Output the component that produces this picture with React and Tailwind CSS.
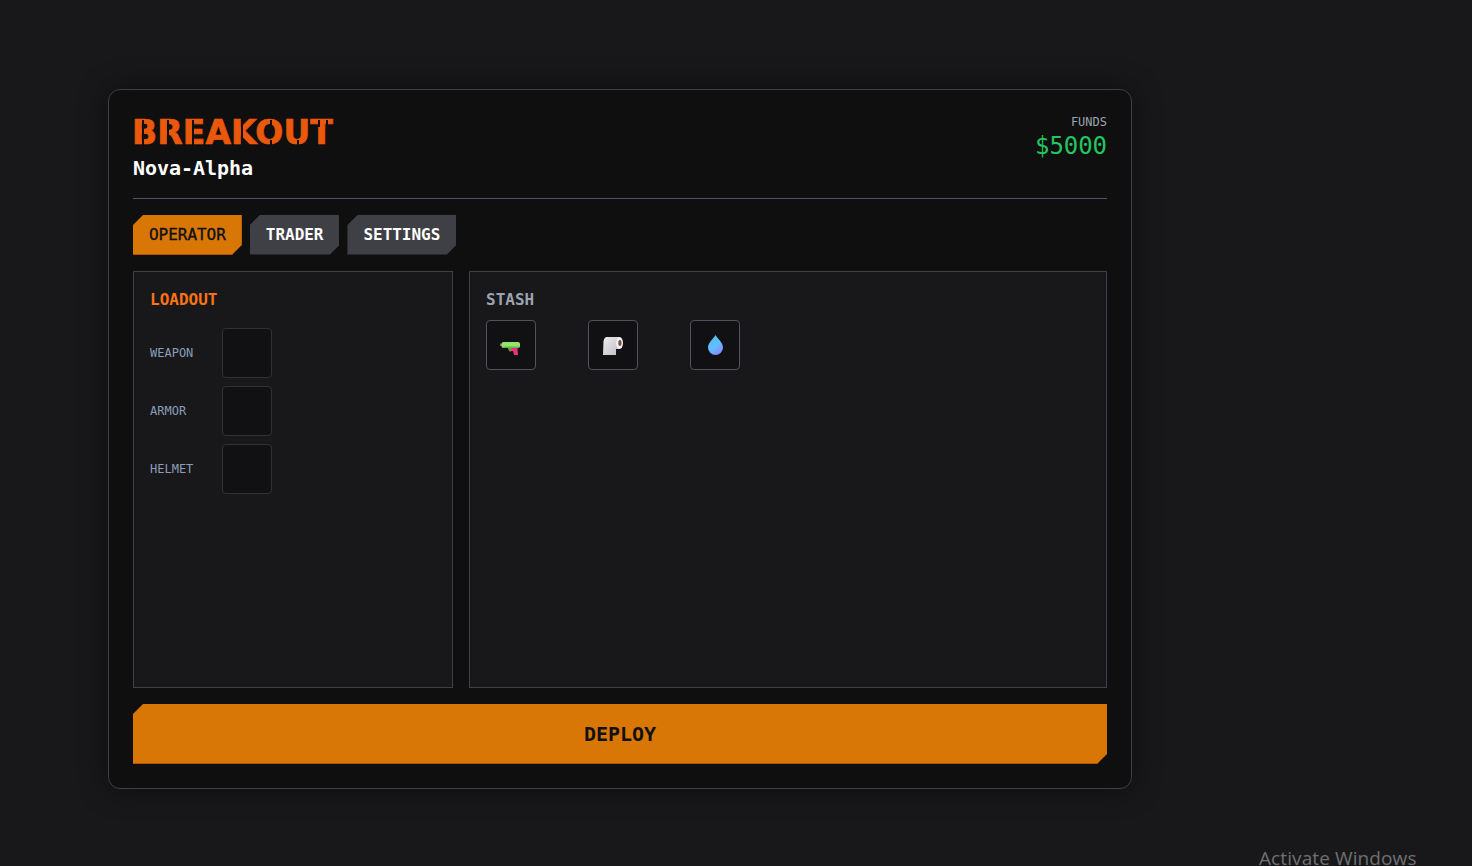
import React from 'react'

const WaterGun = () => (
  <svg width="20" height="13" viewBox="0 0 20 13" className="mt-[7px] mr-[2px]">
    <path d="M8 6h9.5l.5 7h-4l-1-4H9z" fill="#ec2f78" />
    <path d="M8 6h4l-1 3.5H9.5z" fill="#6f9a3a" />
    <rect x="0" y="1.6" width="3" height="2.4" fill="#a5684f" />
    <rect x="1.5" y="0" width="18.5" height="6" rx="2" fill="#94e56c" />
    <rect x="3" y="4.6" width="16" height="1.4" rx="0.7" fill="#62b44e" />
  </svg>
)

const ToiletRoll = () => (
  <svg width="20" height="18" viewBox="0 0 20 18" className="mt-[2px]">
    <defs>
      <linearGradient id="roll" x1="0" y1="0" x2="1" y2="1">
        <stop offset="0" stopColor="#eeebf0" />
        <stop offset="1" stopColor="#c0bcc4" />
      </linearGradient>
    </defs>
    <path d="M3 0H17V12H13V18H0L.5 4Q1 1 3 0z" fill="url(#roll)" />
    <ellipse cx="16.6" cy="6" rx="3.4" ry="6" fill="#f4f2f5" />
    <ellipse cx="16.9" cy="6" rx="1.6" ry="3" fill="#7b4a38" />
  </svg>
)

const Droplet = () => (
  <svg width="15" height="20" viewBox="0 0 15 20">
    <defs>
      <linearGradient id="drop" x1="0" y1="0" x2="0.6" y2="1">
        <stop offset="0" stopColor="#4db8f0" />
        <stop offset="0.6" stopColor="#62c0ff" />
        <stop offset="1" stopColor="#8090ff" />
      </linearGradient>
    </defs>
    <path d="M7.5 0C9 3 15 7.5 15 12.5A7.5 7.5 0 0 1 0 12.5C0 7.5 6 3 7.5 0z" fill="url(#drop)" />
  </svg>
)

const Slot = ({ children, className }) => (
  <div className={`w-[50px] h-[50px] bg-[#111113] border rounded flex items-center justify-center ${className}`}>
    {children}
  </div>
)

const Tab = ({ label, active }) => (
  <button
    className={`h-10 px-4 text-[16px] tracking-[-0.03px] pt-px [clip-path:polygon(10px_0,100%_0,100%_calc(100%-10px),calc(100%-10px)_100%,0_100%,0_10px)] ${
      active
        ? 'bg-[#d97706] text-[#111113] [-webkit-text-stroke:0.35px_#111113] border-b border-[#b45309]'
        : 'bg-[#3f3f46] text-white font-bold border-b border-[#27272a]'
    }`}
  >
    {label}
  </button>
)

// stencil gaps over the title letters
const Cut = ({ className }) => <span className={`absolute w-[1.5px] bg-[#0f0f10] ${className}`} />

const App = () => {
  return (
    <div className="relative h-[866px] overflow-hidden bg-[#18181b] pl-[108px] pt-[89px] font-['DejaVu_Sans_Mono',monospace]">
      <div className="w-[1024px] h-[700px] bg-[#0f0f10] border border-[#3f3f46] rounded-xl p-6 flex flex-col gap-4 shadow-[0_0_30px_rgba(0,0,0,0.45)]">
        <header className="h-[85px] border-b border-[#475569] flex justify-between shrink-0">
          <div>
            <h1 className="relative w-fit -ml-px text-[#ea580c] text-[33px] leading-[38px] font-bold tracking-[0.1px] [-webkit-text-stroke:0.7px_#ea580c] font-['DejaVu_Sans',sans-serif]">
              BREAKOUT
              <Cut className="left-[10px] top-[6px] h-[26px]" />
              <Cut className="left-[35px] top-[6px] h-[26px]" />
              <Cut className="left-[60px] top-[6px] h-[26px]" />
              <Cut className="left-[109px] top-[6px] h-[26px]" />
              <Cut className="left-[138px] top-[6px] h-[6px]" />
              <Cut className="left-[138px] top-[26px] h-[6px]" />
              <Cut className="left-[165px] top-[26px] h-[6px]" />
              <Cut className="left-[186px] top-[6px] h-[7px]" />
              <Cut className="left-[194px] top-[6px] h-[7px]" />
            </h1>
            <p className="text-white text-[20px] font-bold leading-7 mt-[2px] tracking-[-0.05px]">Nova-Alpha</p>
          </div>
          <div className="text-right">
            <p className="text-[#9ca3af] text-[12px] leading-4">FUNDS</p>
            <p className="text-[#22c55e] text-[24px] leading-8 tracking-[-0.05px]">$5000</p>
          </div>
        </header>

        <nav className="flex gap-2 shrink-0">
          <Tab label="OPERATOR" active />
          <Tab label="TRADER" />
          <Tab label="SETTINGS" />
        </nav>

        <main className="flex-1 flex gap-4 min-h-0">
          <section className="w-[320px] bg-[#18181b] border border-[#3f3f46] p-4">
            <h2 className="text-[#f97316] text-[16px] font-bold leading-6 mb-4">LOADOUT</h2>
            <div className="flex flex-col gap-2">
              {['WEAPON', 'ARMOR', 'HELMET'].map((name) => (
                <div key={name} className="flex items-center gap-[28px]">
                  <span className="w-11 text-[12px] text-[#8b9db5]">{name}</span>
                  <Slot className="border-[#303035]" />
                </div>
              ))}
            </div>
          </section>
          <section className="flex-1 bg-[#18181b] border border-[#3f3f46] p-4">
            <h2 className="text-[#9ca3af] text-[16px] font-bold leading-6 mb-2">STASH</h2>
            <div className="flex gap-[52px]">
              <Slot className="border-[#52525b]"><WaterGun /></Slot>
              <Slot className="border-[#52525b]"><ToiletRoll /></Slot>
              <Slot className="border-[#52525b]"><Droplet /></Slot>
            </div>
          </section>
        </main>

        <button className="h-[60px] shrink-0 bg-[#d97706] border-b border-[#b45309] text-[#111113] text-[20px] font-bold pt-px [clip-path:polygon(10px_0,100%_0,100%_calc(100%-10px),calc(100%-10px)_100%,0_100%,0_10px)]">
          DEPLOY
        </button>
      </div>

      <div className="absolute left-[1259px] top-[846px] text-[#707070] text-[19px] font-['Open_Sans',sans-serif] leading-6 tracking-[0.1px]">
        Activate Windows
      </div>
    </div>
  )
}

export default App
